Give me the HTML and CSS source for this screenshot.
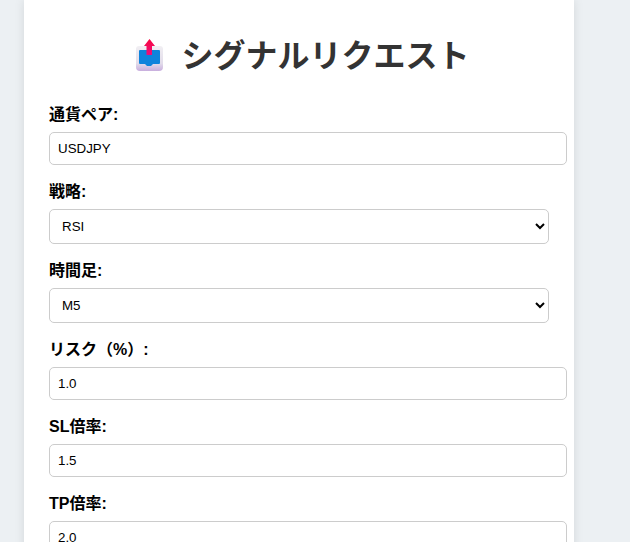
FILE: index.html
```html
<!DOCTYPE html>
<html lang="ja">
<head>
  <meta charset="UTF-8">
  <meta name="viewport" content="width=device-width, initial-scale=1.0">
  <title>シグナルリクエスト</title>
  <link rel="stylesheet" href="styles.css">
</head>
<body>
  <div class="container">
    <h1>
      <svg class="title-icon" viewBox="0 0 27 33" width="27" height="33" aria-hidden="true">
        <defs>
          <linearGradient id="tray" x1="0" y1="0" x2="0" y2="1">
            <stop offset="0" stop-color="#f1eff3"/>
            <stop offset="0.7" stop-color="#e2dcea"/>
            <stop offset="1" stop-color="#c8aede"/>
          </linearGradient>
          <linearGradient id="arrow" x1="0" y1="0" x2="0" y2="1">
            <stop offset="0" stop-color="#f8063f"/>
            <stop offset="1" stop-color="#ee0f7c"/>
          </linearGradient>
        </defs>
        <path d="M3 7h21a3 3 0 0 1 3 3v18a4 4 0 0 1-4 4H4a4 4 0 0 1-4-4V10a3 3 0 0 1 3-3z" fill="url(#tray)"/>
        <path d="M4 11h19a1 1 0 0 1 1 1v12a1 1 0 0 1-1 1h-6l-2 2h-4l-2-2H4a1 1 0 0 1-1-1V12a1 1 0 0 1 1-1z" fill="#0f84dc"/>
        <path d="M13.500 0l5.500 7h-3v9h-5.500V7H8z" fill="url(#arrow)"/>
      </svg>
      <span>シグナルリクエスト</span>
    </h1>
    <form>
      <label for="pair">通貨ペア:</label>
      <input type="text" id="pair" value="USDJPY">

      <label for="strategy">戦略:</label>
      <select id="strategy">
        <option>RSI</option>
        <option>MACD</option>
      </select>

      <label for="timeframe">時間足:</label>
      <select id="timeframe">
        <option>M5</option>
        <option>M15</option>
      </select>

      <label for="risk">リスク（%）:</label>
      <input type="number" id="risk" value="1.0" step="0.1">

      <label for="sl">SL倍率:</label>
      <input type="number" id="sl" value="1.5" step="0.1">

      <label for="tp">TP倍率:</label>
      <input type="number" id="tp" value="2.0" step="0.1">
    </form>
  </div>
</body>
</html>
```

FILE: styles.css
```css
html, body {
  height: 100%;
  overflow: hidden;
}
body {
  font-family: "Liberation Sans", "Noto Sans CJK JP", sans-serif;
  background-color: #ecf0f3;
  margin: 0;
  padding: 0 0 0 24px;
}
.container {
  width: 500px;
  min-height: 600px;
  background: white;
  padding: 25px;
  box-shadow: 0px 0px 10px rgba(0,0,0,0.1);
}
h1 {
  display: flex;
  justify-content: center;
  align-items: center;
  gap: 18px;
  margin: 5px 0 30px;
  padding-left: 8px;
  font-size: 32px;
  color: #333;
}
.title-icon {
  margin-top: 4px;
}
label {
  display: block;
  margin-top: 18px;
  margin-bottom: 8px;
  font-weight: bold;
  font-size: 16px;
  line-height: 18px;
}
input {
  width: 100%;
  box-sizing: content-box;
  padding: 8px;
  border: 1px solid #ccc;
  border-radius: 5px;
  display: block;
  font-family: "Liberation Sans", sans-serif;
  font-size: 13.33px;
  line-height: 15px;
}
select {
  width: 100%;
  height: 35px;
  padding: 8px;
  border: 1px solid #ccc;
  border-radius: 5px;
  display: block;
  background: white;
  font-family: "Liberation Sans", sans-serif;
  font-size: 13.33px;
}
```
